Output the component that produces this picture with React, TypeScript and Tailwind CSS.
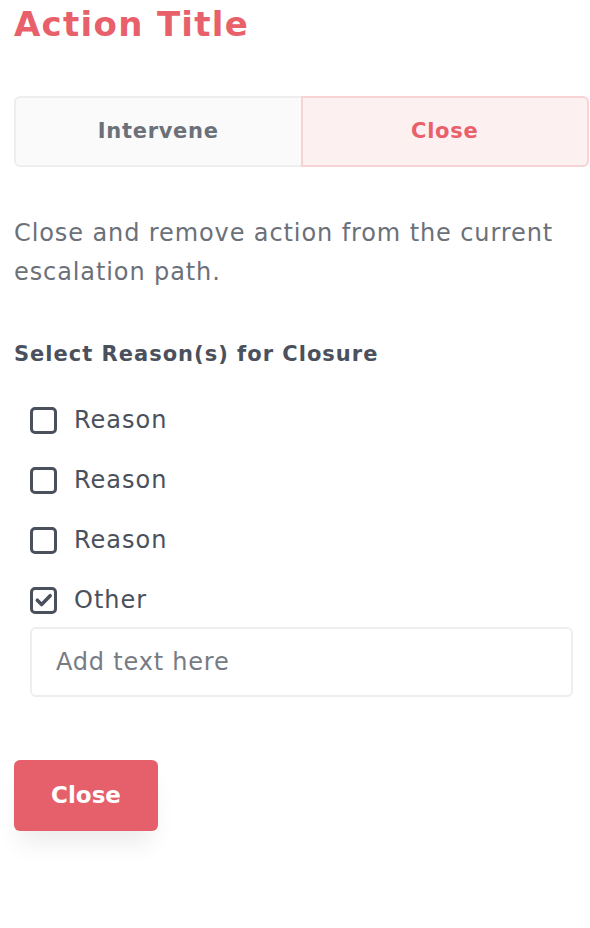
import { useState } from "react";

const reasons = ["Reason", "Reason", "Reason", "Other"];

function Checkbox({ checked }: { checked: boolean }) {
  return (
    <span className="w-[27px] h-[27px] rounded-[5px] border-[3px] border-[#4b515c] flex items-center justify-center shrink-0">
      {checked && (
        <svg width="19" height="19" viewBox="0 0 16 16" fill="none">
          <path d="M2.8 7.8l3.6 3.6L13.6 4" stroke="#4b515c" strokeWidth="3" strokeLinecap="round" strokeLinejoin="round" />
        </svg>
      )}
    </span>
  );
}

export default function App() {
  const [tab, setTab] = useState<"intervene" | "close">("close");
  const [checked, setChecked] = useState([false, false, false, true]);

  return (
    <div className="min-h-screen bg-white px-[14px] pt-[2px] font-['DejaVu_Sans','Open_Sans',sans-serif]">
      <h1 className="text-[34px] leading-[44px] font-bold text-[#e8606a] tracking-[1.3px]">Action Title</h1>

      {/* Tabs */}
      <div className="mt-[50px] flex h-[71px] -mr-[13px]">
        <button
          onClick={() => setTab("intervene")}
          className={`flex-1 rounded-l-[6px] border-2 text-[21px] font-bold tracking-[0.7px] ${
            tab === "intervene" ? "bg-[#fdf0f0] border-[#f8d3d5] text-[#e8606a]" : "bg-[#fafafa] border-[#eeeeee] border-r-0 text-[#6b7079]"
          }`}
        >
          Intervene
        </button>
        <button
          onClick={() => setTab("close")}
          className={`flex-1 rounded-r-[6px] border-2 text-[21px] font-bold tracking-[0.7px] ${
            tab === "close" ? "bg-[#fdf0f0] border-[#f8d3d5] text-[#e8606a]" : "bg-[#fafafa] border-[#eeeeee] text-[#6b7079]"
          }`}
        >
          Close
        </button>
      </div>

      <p className="mt-[47px] text-[24px] leading-[39px] text-[#6b7079] tracking-[0.9px]">
        Close and remove action from the current escalation path.
      </p>

      <h2 className="mt-[47px] text-[21px] font-bold text-[#4b515c] tracking-[1px]">Select Reason(s) for Closure</h2>

      <div className="mt-[34px] pl-[16px] flex flex-col gap-[29px]">
        {reasons.map((r, i) => (
          <label
            key={i}
            className="flex items-center gap-[17px] text-[24px] leading-[31px] text-[#4b515c] tracking-[1px] cursor-pointer"
            onClick={() => setChecked(checked.map((c, j) => (j === i ? !c : c)))}
          >
            <Checkbox checked={checked[i]} />
            {r}
          </label>
        ))}
      </div>

      <div className="mt-[11px] ml-[16px] mr-[3px]">
        <input
          placeholder="Add text here"
          className="w-full h-[70px] rounded-[6px] border-2 border-[#eeeeee] px-[24px] text-[24px] tracking-[0.8px] text-[#4b515c] placeholder:text-[#767b84] outline-none"
        />
      </div>

      <button className="mt-[63px] w-[144px] h-[71px] rounded-[6px] bg-[#e5606a] text-white text-[23px] font-bold shadow-[0_18px_24px_-6px_rgba(0,0,0,0.08)]">
        Close
      </button>
    </div>
  );
}
